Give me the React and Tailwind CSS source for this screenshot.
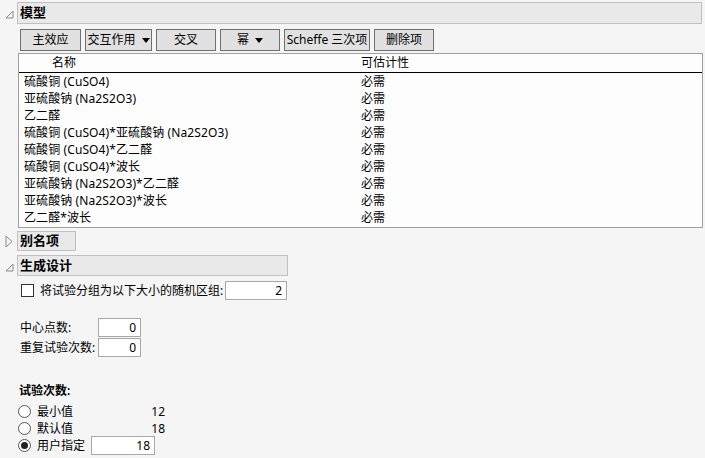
import React from 'react'

const font = { fontFamily: '"Noto Sans", "Noto Sans CJK SC", sans-serif' }

const rows = [
  '硫酸铜 (CuSO4)',
  '亚硫酸钠 (Na2S2O3)',
  '乙二醛',
  '硫酸铜 (CuSO4)*亚硫酸钠 (Na2S2O3)',
  '硫酸铜 (CuSO4)*乙二醛',
  '硫酸铜 (CuSO4)*波长',
  '亚硫酸钠 (Na2S2O3)*乙二醛',
  '亚硫酸钠 (Na2S2O3)*波长',
  '乙二醛*波长',
]

function DownTri() {
  return (
    <svg width="9" height="9" viewBox="0 0 9 9" className="block">
      <path d="M8 1 L8 8 L1 8 Z" fill="none" stroke="#8a8a8a" strokeWidth="1" />
    </svg>
  )
}

function RightTri() {
  return (
    <svg width="8" height="13" viewBox="0 0 8 13" className="block">
      <path d="M1 1 L7 6.5 L1 12 Z" fill="none" stroke="#8a8a8a" strokeWidth="1" />
    </svg>
  )
}

function Caret() {
  return <span className="ml-[6px] inline-block w-0 h-0 border-l-[4px] border-r-[4px] border-t-[5px] border-l-transparent border-r-transparent border-t-black" />
}

function Btn({ w, children, caret }) {
  return (
    <div
      className="h-[22px] flex items-center justify-center border border-[#707070] bg-[#e1e1e1] text-[12px] text-black"
      style={{ width: w }}
    >
      {children}
      {caret && <Caret />}
    </div>
  )
}

function NumBox({ w, value }) {
  return (
    <div
      className="h-[19px] border border-[#a8a8a8] bg-white flex items-center justify-end pr-[4px] text-[12px]"
      style={{ width: w }}
    >
      {value}
    </div>
  )
}

function Radio({ checked }) {
  return (
    <div className="w-[13px] h-[13px] rounded-full border border-[#555] bg-white flex items-center justify-center">
      {checked && <div className="w-[7px] h-[7px] rounded-full bg-[#222]" />}
    </div>
  )
}

export default function App() {
  return (
    <div className="w-[705px] h-[458px] bg-[#f5f5f5] text-black overflow-hidden" style={font}>
      {/* 模型 */}
      <div className="flex items-center pt-[2px] pr-[3px]">
        <div className="w-[17px] flex justify-center pl-[2px] pt-[3px]">
          <DownTri />
        </div>
        <div className="flex-1 h-[22px] bg-[#e9e9e9] border border-[#c0c0c0] flex items-center pl-[2px] text-[13px] font-bold">
          模型
        </div>
      </div>

      <div className="flex pl-[20px] pt-[5px] gap-[4px]">
        <Btn w={61}>主效应</Btn>
        <Btn w={67} caret>交互作用</Btn>
        <Btn w={60}>交叉</Btn>
        <Btn w={60} caret>幂</Btn>
        <Btn w={86}>Scheffe 三次项</Btn>
        <Btn w={60}>删除项</Btn>
      </div>

      <div className="ml-[18px] mr-[2px] mt-[2px] h-[175px] border border-[#a0a0a0] bg-[#fdfdfd] text-[12px]">
        <div className="flex h-[19px] items-center border-b-[1.5px] border-black">
          <div className="w-[342px] pl-[33px]">名称</div>
          <div>可估计性</div>
        </div>
        {rows.map((r) => (
          <div key={r} className="flex h-[17px] items-center">
            <div className="w-[342px] pl-[5px] whitespace-nowrap tracking-[0.1px]">{r}</div>
            <div>必需</div>
          </div>
        ))}
      </div>

      {/* 别名项 */}
      <div className="flex items-center mt-[3px]">
        <div className="w-[17px] flex justify-center pl-[1px]">
          <RightTri />
        </div>
        <div className="w-[59px] h-[20px] bg-[#e9e9e9] border border-[#c0c0c0] flex items-center pl-[2px] text-[13px] font-bold">
          别名项
        </div>
      </div>

      {/* 生成设计 */}
      <div className="flex items-center mt-[4px]">
        <div className="w-[17px] flex justify-center pl-[2px] pt-[3px]">
          <DownTri />
        </div>
        <div className="w-[271px] h-[21px] bg-[#e9e9e9] border border-[#c0c0c0] flex items-center pl-[2px] text-[13px] font-bold">
          生成设计
        </div>
      </div>

      <div className="flex items-center pl-[21px] mt-[5px] text-[12px]">
        <div className="w-[13px] h-[13px] border border-[#333] bg-white" />
        <span className="ml-[6px]">将试验分组为以下大小的随机区组:</span>
        <div className="ml-[2px]">
          <NumBox w={62} value="2" />
        </div>
      </div>

      <div className="pl-[20px] mt-[18px] text-[12px] flex flex-col gap-[1px]">
        <div className="flex items-center">
          <span className="w-[78px]">中心点数:</span>
          <NumBox w={43} value="0" />
        </div>
        <div className="flex items-center">
          <span className="w-[78px]">重复试验次数:</span>
          <NumBox w={43} value="0" />
        </div>
      </div>

      <div className="pl-[18px] mt-[25px] text-[12px]">
        <div className="pl-[1px] font-semibold">试验次数:</div>
        <div className="flex flex-col mt-[3px]">
          <div className="flex items-center h-[17px]">
            <Radio />
            <span className="ml-[6px] w-[60px]">最小值</span>
            <span className="w-[73px] text-right pr-[5px]">12</span>
          </div>
          <div className="flex items-center h-[17px]">
            <Radio />
            <span className="ml-[6px] w-[60px]">默认值</span>
            <span className="w-[73px] text-right pr-[5px]">18</span>
          </div>
          <div className="flex items-center h-[17px]">
            <Radio checked />
            <span className="ml-[6px] w-[54px]">用户指定</span>
            <NumBox w={64} value="18" />
          </div>
        </div>
      </div>
    </div>
  )
}
